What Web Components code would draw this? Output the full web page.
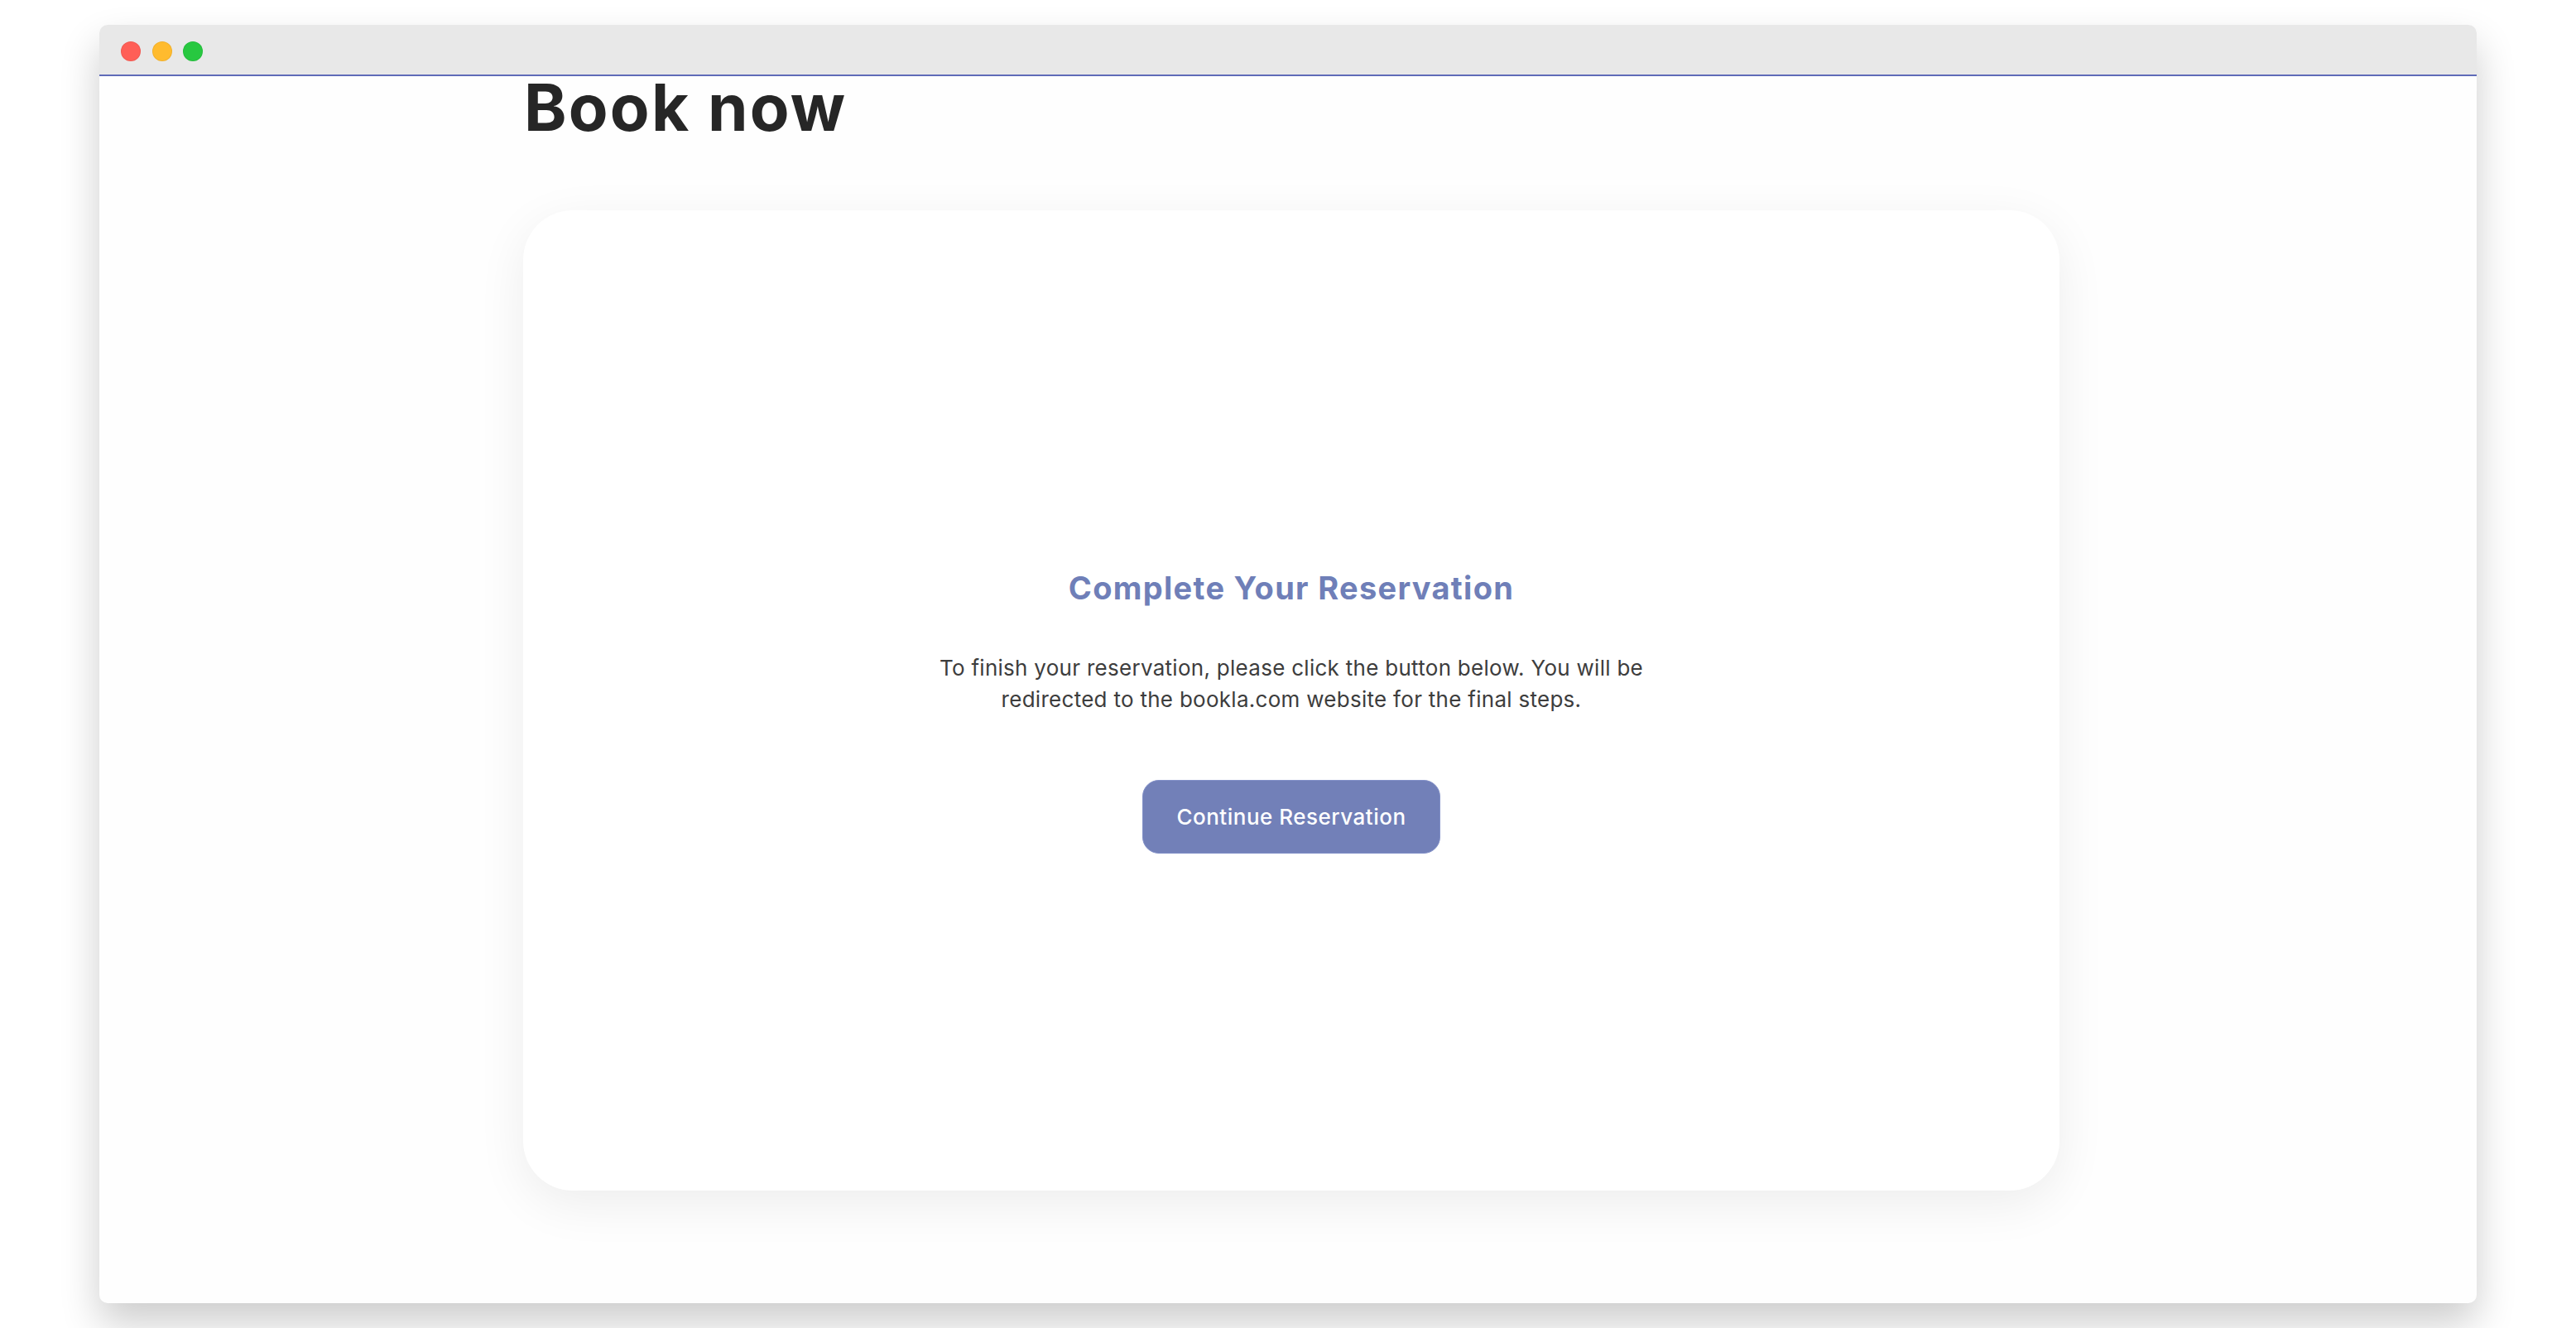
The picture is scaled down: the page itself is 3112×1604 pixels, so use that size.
<!DOCTYPE html>
<html lang="en">
<head>
<meta charset="utf-8">
<title>Book now</title>
<style>
	html, body { margin: 0; background: #fff; }
	html { overflow: hidden; }
	body {
		box-sizing: border-box;
		height: 1604px;
		padding: 30px 120px;
		font-family: "Inter", "Liberation Sans", sans-serif;
	}
</style>
</head>
<body>
<browser-window>
	<booking-page>
		<reservation-card>
			<span slot="title">Complete Your Reservation</span>
			To finish your reservation, please click the button below. You will be<br>redirected to the bookla.com website for the final steps.
			<span slot="action">Continue Reservation</span>
		</reservation-card>
	</booking-page>
</browser-window>

<script>
	class BrowserWindow extends HTMLElement {
		constructor() {
			super();
			this.attachShadow({ mode: "open" });
			this.shadowRoot.innerHTML = `
				<style>
					:host {
						display: flex;
						flex-direction: column;
						box-sizing: border-box;
						width: 2872px;
						height: 1544px;
						background: #fefefe;
						border-radius: 10px;
						box-shadow: 0 24px 48px rgba(0, 0, 0, 0.2);
					}
					.bar {
						display: flex;
						align-items: center;
						gap: 13.5px;
						flex: none;
						box-sizing: border-box;
						height: 62px;
						padding: 4px 0 0 26px;
						background: #e8e8e8;
						border-bottom: 2px solid #5f6bb8;
						border-radius: 10px 10px 0 0;
					}
					.dot {
						width: 24px;
						height: 24px;
						border-radius: 50%;
						box-shadow: inset 0 0 0 1px rgba(0, 0, 0, 0.06);
					}
					.red { background: #ff5f57; }
					.yellow { background: #ffbb2e; }
					.green { background: #27c840; }
				</style>
				<div class="bar">
					<div class="dot red"></div>
					<div class="dot yellow"></div>
					<div class="dot green"></div>
				</div>
				<slot></slot>
			`;
		}
	}

	class BookingPage extends HTMLElement {
		constructor() {
			super();
			this.attachShadow({ mode: "open" });
			this.shadowRoot.innerHTML = `
				<style>
					:host {
						display: block;
						width: 1856px;
						margin-left: 512px;
					}
					h1 {
						margin: 0 0 86px;
						padding-left: 1px;
						font-size: 78px;
						line-height: 76px;
						font-weight: 700;
						letter-spacing: 2.2px;
						color: #262626;
					}
				</style>
				<h1>Book now</h1>
				<slot></slot>
			`;
		}
	}

	class ReservationCard extends HTMLElement {
		constructor() {
			super();
			this.attachShadow({ mode: "open" });
			this.shadowRoot.innerHTML = `
				<style>
					:host {
						display: flex;
						flex-direction: column;
						align-items: center;
						justify-content: center;
						box-sizing: border-box;
						height: 1184px;
						padding-top: 21px;
						background: #fff;
						border-radius: 60px;
						box-shadow: 0 16px 60px rgba(0, 0, 0, 0.07);
						text-align: center;
					}
					h2 {
						margin: 0 0 50px;
						font-size: 38px;
						line-height: 56px;
						font-weight: 700;
						letter-spacing: 1.3px;
						color: #6f7fb8;
					}
					p {
						margin: 0 0 78px;
						font-size: 26px;
						line-height: 38px;
						letter-spacing: 0.28px;
						color: #3d3d3d;
					}
					button {
						box-sizing: border-box;
						width: 360px;
						height: 89px;
						padding: 0;
						border: 1px solid #8391c8;
						border-radius: 20px;
						background: #7280b8;
						color: #fff;
						font: 500 26px "Inter", "Liberation Sans", sans-serif;
						letter-spacing: 0.5px;
					}
				</style>
				<h2><slot name="title"></slot></h2>
				<p><slot></slot></p>
				<button><slot name="action"></slot></button>
			`;
		}
	}

	customElements.define("browser-window", BrowserWindow);
	customElements.define("booking-page", BookingPage);
	customElements.define("reservation-card", ReservationCard);
</script>
</body>
</html>
